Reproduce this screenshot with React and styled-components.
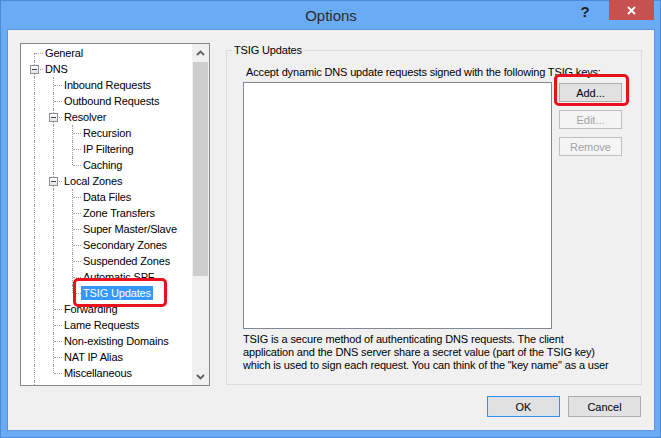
import React from 'react'
import styled, { createGlobalStyle, css } from 'styled-components'

const GlobalStyle = createGlobalStyle`
html, body {
  margin: 0;
  padding: 0;
}
body {
  font-family: "Liberation Sans", Arial, sans-serif;
  font-size: 11px;
  letter-spacing: -0.15px;
  color: #000;
}
`

const Window = styled.div`
width: 661px;
height: 438px;
box-sizing: border-box;
background: #6aabf5;
border: 1px solid #4a8bdc;
padding: 0 6px 7px 7px;
display: flex;
flex-direction: column;
`

const TitleBar = styled.div`
height: 29px;
flex: none;
display: grid;
grid-template-columns: 1fr auto 1fr;
align-items: start;
`

const Title = styled.div`
grid-column: 2;
font-size: 15px;
letter-spacing: 0;
line-height: 29px;
color: #2b2b2b;
`

const Controls = styled.div`
display: flex;
justify-content: flex-end;
align-items: flex-start;
`

const HelpButton = styled.div`
width: 26px;
height: 20px;
text-align: center;
font-size: 15px;
font-weight: bold;
line-height: 22px;
color: #1e1e1e;
margin-right: 11px;
`

const CloseButton = styled.div`
width: 45px;
height: 20px;
margin-top: -1px;
background: #c75050;
display: flex;
align-items: center;
justify-content: center;
padding-top: 1px;
box-sizing: border-box;
`

const Client = styled.div`
flex: 1;
background: #f0f0f0;
box-shadow: 0 0 0 1px #5a96e0;
display: flex;
flex-direction: column;
padding: 13px 12px 12px 12px;
box-sizing: border-box;
`

const Main = styled.div`
display: flex;
gap: 16px;
height: 343px;
`

const TreeBox = styled.div`
width: 190px;
flex: none;
box-sizing: border-box;
border: 1px solid #828790;
background: #fff;
display: flex;
`

const TreeBody = styled.div`
flex: 1;
overflow: hidden;
padding: 1px 0 0 3px;
display: flex;
flex-direction: column;
`

const TreeRow = styled.div`
display: flex;
height: 16px;
flex: none;
`

const TreeTail = styled.div`
display: flex;
flex: 1;
`

const dotted = '1px dotted #a0a0a0'

const Guide = styled.span`
width: 19px;
flex: none;
position: relative;
${p => p.$line && css`
  &::before {
    content: '';
    position: absolute;
    left: 10px;
    top: 0;
    bottom: 0;
    border-left: ${dotted};
  }
`}
`

const Connector = styled.span`
width: 19px;
flex: none;
position: relative;

&::before {
  content: '';
  position: absolute;
  left: 10px;
  top: ${p => (p.$first ? '8px' : '0')};
  height: ${p => (p.$first ? '8px' : p.$last ? '8px' : '16px')};
  border-left: ${dotted};
}
&::after {
  content: '';
  position: absolute;
  left: 11px;
  right: 0;
  top: 8px;
  border-top: ${dotted};
}
`

const Expander = styled.span`
position: absolute;
left: 6px;
top: 4px;
width: 9px;
height: 9px;
box-sizing: border-box;
border: 1px solid #8e8f8f;
background: linear-gradient(#ffffff, #e3e3e3);
z-index: 1;

&::after {
  content: '';
  position: absolute;
  left: 1px;
  right: 1px;
  top: 3px;
  height: 1px;
  background: #3b4a5c;
}
`

const Label = styled.span`
position: relative;
margin-top: 1px;
height: 14px;
line-height: 14px;
padding: 0 2px;
white-space: nowrap;
${p => p.$selected && css`
  background: #3399ff;
  color: #fff;
`}
`

const Highlight = styled.span`
position: absolute;
top: ${p => p.$t}px;
right: ${p => p.$r}px;
bottom: ${p => p.$b}px;
left: ${p => p.$l}px;
border: 3px solid #e8121c;
border-radius: 5px;
pointer-events: none;
z-index: 2;
`

const Scrollbar = styled.div`
width: 17px;
flex: none;
background: #f0f0f0;
display: flex;
flex-direction: column;
`

const ScrollArrow = styled.div`
height: 17px;
flex: none;
display: flex;
align-items: center;
justify-content: center;
`

const Thumb = styled.div`
height: 214px;
margin: 1px 1px 0;
background: #cdcdcd;
`

const Track = styled.div`
flex: 1;
`

const GroupBox = styled.fieldset`
flex: 1;
min-width: 0;
margin: 1px 0;
padding: 0;
border: 1px solid #dcdcdc;
box-sizing: border-box;
`

const GroupTitle = styled.legend`
margin-left: 5px;
padding: 0 2px;
line-height: 13px;
`

const GroupBody = styled.div`
padding: 9px 0 0 16px;
`

const Caption = styled.div`
padding-left: 3px;
line-height: 13px;
white-space: nowrap;
`

const KeysArea = styled.div`
display: flex;
gap: 7px;
margin-top: 3px;
`

const KeyList = styled.div`
width: 309px;
height: 247px;
box-sizing: border-box;
border: 1px solid #828790;
background: #fff;
`

const SideButtons = styled.div`
display: flex;
flex-direction: column;
gap: 8px;
padding-top: 1px;
`

const Button = styled.button`
position: relative;
width: ${p => p.$w || 63}px;
height: ${p => p.$h || 19}px;
padding: 0;
box-sizing: border-box;
font: inherit;
color: #000;
border: 1px solid #adadad;
background: #e1e1e1;
border-radius: 0;

&:disabled {
  color: #a3a3a3;
  border-color: #bfbfbf;
  background: #f4f4f4;
}

${p => p.$default && css`
  border-color: #3c8ee0;
  box-shadow: inset 0 0 0 1px #cfe4f9;
`}
`

const Description = styled.div`
margin-top: 4px;
line-height: 13px;
height: 39px;
overflow: hidden;
white-space: nowrap;
`

const Footer = styled.div`
display: flex;
justify-content: flex-end;
gap: 8px;
margin-top: 10px;
padding-right: 1px;
`

const tree = [
  { label: 'General' },
  {
    label: 'DNS',
    children: [
      'Inbound Requests',
      'Outbound Requests',
      { label: 'Resolver', children: ['Recursion', 'IP Filtering', 'Caching'] },
      {
        label: 'Local Zones',
        children: [
          'Data Files',
          'Zone Transfers',
          'Super Master/Slave',
          'Secondary Zones',
          'Suspended Zones',
          'Automatic SPF',
          { label: 'TSIG Updates', selected: true },
        ],
      },
      'Forwarding',
      'Lame Requests',
      'Non-existing Domains',
      'NAT IP Alias',
      'Miscellaneous',
    ],
  },
]

// the root list goes on below the visible part, so its line never ends
const flatten = (nodes, depth = 0, guides = [], more = false) =>
  nodes.flatMap((n, i) => {
    const node = typeof n === 'string' ? { label: n } : n
    const last = i === nodes.length - 1 && !more
    const row = { ...node, depth, guides, last, first: depth === 0 && i === 0 }
    const kids = node.children ? flatten(node.children, depth + 1, [...guides, !last]) : []
    return [row, ...kids]
  })

const rows = flatten(tree, 0, [], true)

const Chevron = ({ down }) => (
  <svg width="9" height="6" viewBox="0 0 9 6">
    <polyline
      points={down ? '1,1 4.5,4.5 8,1' : '1,5 4.5,1.5 8,5'}
      fill="none"
      stroke="#606060"
      strokeWidth="1.8"
    />
  </svg>
)

const Tree = () => (
  <TreeBox>
    <TreeBody>
      {rows.map(r => (
        <TreeRow key={r.label}>
          {r.guides.map((g, i) => <Guide key={i} $line={g} />)}
          <Connector $first={r.first} $last={r.last}>
            {r.children && <Expander />}
          </Connector>
          <Label $selected={r.selected}>
            {r.label}
            {r.selected && <Highlight $t={-8} $r={-14} $b={-7} $l={-8} />}
          </Label>
        </TreeRow>
      ))}
      <TreeTail>
        <Guide $line />
      </TreeTail>
    </TreeBody>
    <Scrollbar>
      <ScrollArrow><Chevron /></ScrollArrow>
      <Thumb />
      <Track />
      <ScrollArrow><Chevron down /></ScrollArrow>
    </Scrollbar>
  </TreeBox>
)

const App = () => {
  return (
    <>
      <GlobalStyle />
      <Window>
        <TitleBar>
          <Title>Options</Title>
          <Controls>
            <HelpButton>?</HelpButton>
            <CloseButton>
              <svg width="9" height="9" viewBox="0 0 9 9">
                <path d="M1 1 L8 8 M8 1 L1 8" stroke="#fff" strokeWidth="1.8" />
              </svg>
            </CloseButton>
          </Controls>
        </TitleBar>
        <Client>
          <Main>
            <Tree />
            <GroupBox>
              <GroupTitle>TSIG Updates</GroupTitle>
              <GroupBody>
                <Caption>Accept dynamic DNS update requests signed with the following TSIG keys:</Caption>
                <KeysArea>
                  <KeyList />
                  <SideButtons>
                    <Button>
                      Add...
                      <Highlight $t={-10} $r={-8} $b={-5} $l={-6} />
                    </Button>
                    <Button disabled>Edit...</Button>
                    <Button disabled>Remove</Button>
                  </SideButtons>
                </KeysArea>
                <Description>
                  TSIG is a secure method of authenticating DNS requests. The client<br />
                  application and the DNS server share a secret value (part of the TSIG key)<br />
                  which is used to sign each request. You can think of the "key name" as a user
                </Description>
              </GroupBody>
            </GroupBox>
          </Main>
          <Footer>
            <Button $w={73} $h={21} $default>OK</Button>
            <Button $w={73} $h={21}>Cancel</Button>
          </Footer>
        </Client>
      </Window>
    </>
  )
}

export default App
